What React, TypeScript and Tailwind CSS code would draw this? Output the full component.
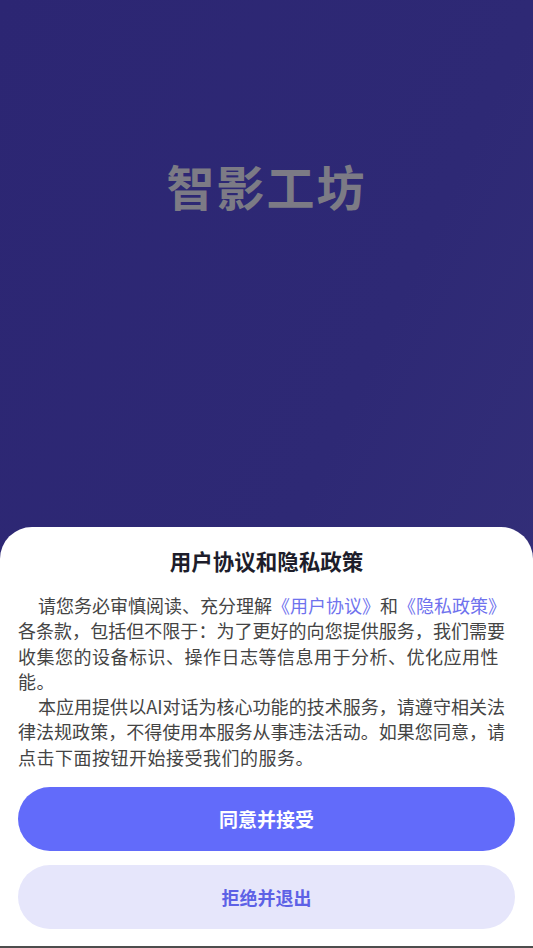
import React from 'react'

const font = { fontFamily: '"Noto Sans CJK SC", "Noto Sans", sans-serif' }

function Line({ children, justify = true, indent = false }: { children: React.ReactNode; justify?: boolean; indent?: boolean }) {
  return (
    <div
      className={`h-[25.3px] leading-[25.3px] whitespace-nowrap ${indent ? 'pl-[20px]' : ''} ${
        justify ? 'text-justify [text-align-last:justify]' : 'tracking-[0.5px]'
      }`}
    >
      {children}
    </div>
  )
}

function Link({ children }: { children: React.ReactNode }) {
  return <span className="text-[#6f72ee]">{children}</span>
}

export default function App() {
  return (
    <div
      style={font}
      className="w-[533px] h-[948px] flex flex-col overflow-hidden bg-[linear-gradient(115deg,#2c2673_0%,#2e2975_55%,#35317a_100%)]"
    >
      <div className="flex-1 flex justify-center pt-[161px]">
        <h1 className="text-[48px] leading-[48px] font-bold tracking-[2px] text-[#7c7b85]">智影工坊</h1>
      </div>

      <div className="bg-white rounded-t-[32px] h-[421px] flex flex-col px-[18px] pt-[20px]">
        <h2 className="text-center text-[21.5px] leading-[28px] font-bold text-[#1d1d2b]">用户协议和隐私政策</h2>

        <div className="mt-[18px] text-[18px] text-[#444444] pr-[10px]">
          <Line indent>
            请您务必审慎阅读、充分理解<Link>《用户协议》</Link>和<Link>《隐私政策》</Link>
          </Line>
          <Line>各条款，包括但不限于：为了更好的向您提供服务，我们需要</Line>
          <Line justify={false}>收集您的设备标识、操作日志等信息用于分析、优化应用性</Line>
          <Line justify={false}>能。</Line>
          <Line indent>本应用提供以AI对话为核心功能的技术服务，请遵守相关法</Line>
          <Line>律法规政策，不得使用本服务从事违法活动。如果您同意，请</Line>
          <Line justify={false}>点击下面按钮开始接受我们的服务。</Line>
        </div>

        <button className="mt-[17px] h-[64px] w-full rounded-full bg-[#626bfa] text-white text-[19px] font-bold">
          同意并接受
        </button>
        <button className="mt-[14px] h-[64px] w-full rounded-full bg-[#e6e6fb] text-[#5d61e6] text-[18px] font-bold">
          拒绝并退出
        </button>

        <div className="mt-auto -mx-[18px] h-[2px] bg-[#4d4d4d]" />
      </div>
    </div>
  )
}
